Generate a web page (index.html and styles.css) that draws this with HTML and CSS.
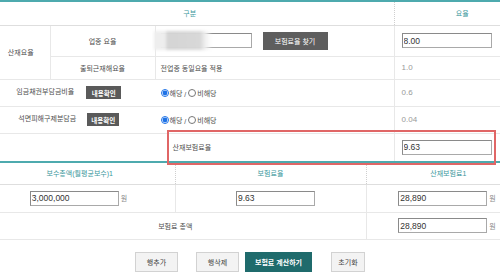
FILE: index.html
```html
<!DOCTYPE html>
<html lang="ko">
<head>
<meta charset="utf-8">
<title>산재보험료 계산</title>
<link rel="stylesheet" href="styles.css">
</head>
<body>
<div class="wrap">
  <table class="t1">
    <colgroup><col class="a1"><col class="a2"><col class="a3"><col class="a4"></colgroup>
    <thead>
      <tr><th colspan="3" class="h-gubun">구분</th><th class="dot h-rate">요율</th></tr>
    </thead>
    <tbody>
      <tr class="r1">
        <td rowspan="2" class="lab first side">산재요율</td>
        <td class="lab">업종 요율</td>
        <td class="val"><span class="redact-box"><input class="inp w91" type="text" value=""><span class="redact"></span></span><button class="btn-dark">보험료율 찾기</button></td>
        <td class="val v4"><input class="inp w90" type="text" value="8.00"></td>
      </tr>
      <tr class="r2">
        <td class="lab">출퇴근재해요율</td>
        <td class="val">전업종 동일요율 적용</td>
        <td class="val v4 num">1.0</td>
      </tr>
      <tr class="r3">
        <td colspan="2" class="lab first wide-lab">임금채권부담금비율<button class="btn-sm">내용확인</button></td>
        <td class="val noline"><label class="rd"><input type="radio" name="a" checked>해당</label> / <label class="rd"><input type="radio" name="a">비해당</label></td>
        <td class="val v4 num">0.6</td>
      </tr>
      <tr class="r4">
        <td colspan="2" class="lab first wide-lab">석면피해구제분담금<button class="btn-sm narrow">내용확인</button></td>
        <td class="val noline"><label class="rd"><input type="radio" name="b" checked>해당</label> / <label class="rd"><input type="radio" name="b">비해당</label></td>
        <td class="val v4 num">0.04</td>
      </tr>
      <tr class="r5">
        <td colspan="2" class="first"></td>
        <td class="val total noline">산재보험료율</td>
        <td class="val v4"><input class="inp w90" type="text" value="9.63"></td>
      </tr>
    </tbody>
  </table>
  <table class="t2">
    <colgroup><col class="b1"><col class="b2"><col class="b3"></colgroup>
    <thead>
      <tr><th class="left-shift">보수총액(월평균보수)1</th><th class="dot">보험료율</th><th class="dot right-shift">산재보험료1</th></tr>
    </thead>
    <tbody>
      <tr class="s1">
        <td class="ctr first left-shift"><input class="inp w89" type="text" value="3,000,000"><span class="won">원</span></td>
        <td class="ctr shift"><input class="inp w79" type="text" value="9.63"></td>
        <td class="ctr right-shift"><input class="inp w89" type="text" value="28,890"><span class="won">원</span></td>
      </tr>
      <tr class="s2">
        <td colspan="2" class="ctr first left-shift">보험료 총액</td>
        <td class="ctr right-shift"><input class="inp w89" type="text" value="28,890"><span class="won">원</span></td>
      </tr>
    </tbody>
  </table>
  <div class="highlight"></div>
</div>
<div class="btns">
  <button class="btn b-add">행추가</button>
  <button class="btn b-del">행삭제</button>
  <button class="btn b-calc">보험료 계산하기</button>
  <button class="btn b-reset">초기화</button>
</div>
</body>
</html>
```

FILE: styles.css
```css
* { box-sizing: border-box; }
html, body { margin: 0; padding: 0; background: #fff; }
body {
  font-family: "Liberation Sans", "Noto Sans CJK KR", sans-serif;
  font-size: 7px;
  color: #4e4e4e;
}
.wrap { position: relative; width: 500px; }
table { width: 100%; border-collapse: collapse; table-layout: fixed; }
.a1 { width: 50px; } .a2 { width: 105px; } .a3 { width: 239px; } .a4 { width: 106px; }
.b1 { width: 175px; } .b2 { width: 191px; } .b3 { width: 134px; }

.t1, .t2 { border-top: 2px solid #4eaaae; }
th {
  height: 24px; padding: 0;
  font-weight: normal; color: #3b979c; text-align: center;
  border-bottom: 1px solid #dedede;
}
th.dot { border-left: 1px dotted #cfcfcf; }
.t2 th { height: 22px; }
.h-gubun { padding-right: 14px; }
.h-rate { padding-left: 30px; }
.left-shift { padding-right: 15px; }
.right-shift { padding-left: 30px; }

td { padding: 0; border-bottom: 1px solid #e8e8e8; border-left: 1px solid #e8e8e8; vertical-align: middle; }
td.first { border-left: none; }
td.noline { border-left-color: transparent; }
.r1 td { height: 31px; }
.r2 td { height: 23px; }
.r3 td, .r4 td { height: 27px; }
.r5 td { height: 28px; border-bottom: none; }
.s1 td { height: 28px; }
.s2 td { height: 27px; }

.lab { text-align: center; }
.side { padding-right: 8px; }
.wide-lab { padding-right: 17px; }
.val { padding-left: 5px; }
.val.v4 { padding-left: 7px; }
.num { color: #999; font-size: 8px; }
.total { padding-left: 17px; }
.ctr { text-align: center; }
.shift { padding-left: 10px; }

.inp {
  height: 15px; padding: 0 1px; margin: 0;
  border: 1px solid #a9a9a9; border-top-color: #8a8a8a; border-left-color: #8a8a8a;
  font-family: "Liberation Sans", sans-serif; font-size: 8.5px; color: #333;
  vertical-align: middle; background: #fff;
}
.w91 { width: 91px; } .w90 { width: 90px; } .w89 { width: 89px; } .w79 { width: 79px; }
.won { display: inline-block; width: 9px; margin-left: 2px; color: #888; vertical-align: middle; text-align: left; }

.redact-box { position: relative; display: inline-block; vertical-align: middle; }
.redact {
  position: absolute; left: -7px; top: -2px; width: 58px; height: 19px;
  background: linear-gradient(90deg, #eeeeee 0, #eeeeee 20%, #d4d4d4 22%, #d8d8d8 80%, #f0f0f0 88%, rgba(255,255,255,0) 100%);
  filter: blur(1.5px);
}

.btn-dark {
  height: 18px; width: 65px; margin: 0 0 0 11px; padding: 0;
  border: none; background: #5e5e5e; color: #fff;
  font-family: inherit; font-size: 7px; vertical-align: middle;
}
.btn-sm {
  height: 13px; width: 35px; margin: 0 0 0 12px; padding: 0;
  border: none; background: #5a5a5a; color: #fff; font-weight: bold;
  font-family: inherit; font-size: 6.5px; vertical-align: middle;
}
.btn-sm.narrow { width: 32px; margin-left: 11px; }

.rd { display: inline-flex; align-items: center; }
.rd input { width: 8px; height: 8px; margin: 0 1px 0 0; accent-color: #1e72e6; }

.highlight {
  position: absolute; left: 167px; top: 130px; width: 329px; height: 35px;
  border: 2px solid #e06666;
}

.btns { display: flex; justify-content: center; margin-top: 12px; }
.btn {
  height: 20px; padding: 0; margin: 0;
  border: 1px solid #d2d2d2; background: #f3f3f3; color: #444;
  font-family: "Noto Sans CJK KR", sans-serif; font-size: 7px;
}
.b-add { width: 43px; }
.b-del { width: 43px; margin-left: 18px; }
.b-calc { width: 67px; margin-left: 6px; background: #1f6b6c; border-color: #1f6b6c; color: #fff; font-weight: bold; }
.b-reset { width: 34px; margin-left: 19px; }
```
